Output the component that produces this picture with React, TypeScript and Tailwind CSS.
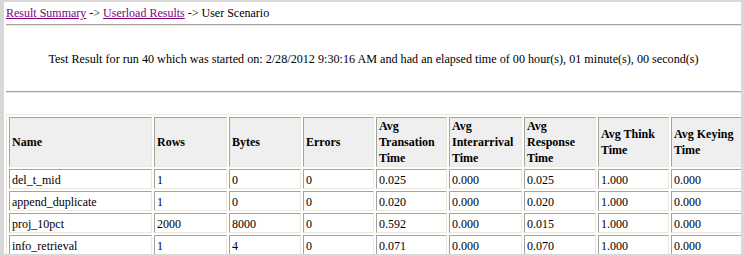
import React from 'react';

const rows = [
  ['del_t_mid', '1', '0', '0', '0.025', '0.000', '0.025', '1.000', '0.000'],
  ['append_duplicate', '1', '0', '0', '0.020', '0.000', '0.020', '1.000', '0.000'],
  ['proj_10pct', '2000', '8000', '0', '0.592', '0.000', '0.015', '1.000', '0.000'],
  ['info_retrieval', '1', '4', '0', '0.071', '0.000', '0.070', '1.000', '0.000'],
];

const headers: { label: React.ReactNode; w: string }[] = [
  { label: 'Name', w: 'w-[143px]' },
  { label: 'Rows', w: 'w-[73px]' },
  { label: 'Bytes', w: 'w-[72px]' },
  { label: 'Errors', w: 'w-[71px]' },
  { label: <>Avg<br />Transation<br />Time</>, w: 'w-[71px]' },
  { label: <>Avg<br />Interarrival<br />Time</>, w: 'w-[73px]' },
  { label: <>Avg<br />Response<br />Time</>, w: 'w-[72px]' },
  { label: <>Avg Think<br />Time</>, w: 'w-[71px]' },
  { label: <>Avg Keying<br />Time</>, w: 'w-[72px]' },
];

const cell = 'border border-t-[#a3a59a] border-l-[#a3a59a] border-b-[#ebe8dc] border-r-[#ebe8dc] px-[2px] text-left';

export default function App() {
  return (
    <div className="w-[744px] h-[256px] bg-[#d8d8d8] pl-[4px] pt-[2px] pr-[3px] pb-[2px] font-['Liberation_Serif',serif] text-[12px] text-black">
      <div className="h-full bg-white overflow-hidden pl-[2px]">
        {/* breadcrumb */}
        <div className="pt-[4px] leading-[14px] whitespace-nowrap">
          <a className="text-[#800080] underline">Result Summary</a>
          {' -> '}
          <a className="text-[#800080] underline">Userload Results</a>
          {' -> User Scenario'}
        </div>
        <div className="mt-[4px] border-t border-t-[#a5a49a] border-b border-b-[#ece9dc]" />

        <div className="mt-[26px] leading-[14px] text-center whitespace-nowrap text-[12.15px]">
          Test Result for run 40 which was started on: 2/28/2012 9:30:16 AM and had an elapsed time of 00 hour(s), 01 minute(s), 00 second(s)
        </div>
        <div className="mt-[25px] border-t border-t-[#a5a49a] border-b border-b-[#ece9dc]" />

        <table className="mt-[21px] w-[740px] max-w-none table-fixed border-separate border-spacing-[2px] border border-t-[#ebe8dc] border-l-[#ebe8dc] border-b-[#a3a59a] border-r-[#a3a59a] bg-white">
          <thead>
            <tr>
              {headers.map((h, i) => (
                <th key={i} className={`${cell} ${h.w} h-[50px] bg-[#efefef] font-bold leading-[16px] align-middle`}>
                  {h.label}
                </th>
              ))}
            </tr>
          </thead>
          <tbody>
            {rows.map((r, i) => (
              <tr key={i}>
                {r.map((v, j) => (
                  <td key={j} className={`${cell} h-[20px] leading-[16px] pt-[2px] pb-0 whitespace-nowrap`}>
                    {v}
                  </td>
                ))}
              </tr>
            ))}
          </tbody>
        </table>
      </div>
    </div>
  );
}
